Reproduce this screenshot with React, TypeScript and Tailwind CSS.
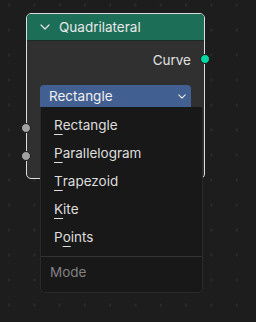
import React from 'react';

const items: { label: string; key: number }[] = [
  { label: 'Rectangle', key: 0 },
  { label: 'Parallelogram', key: 0 },
  { label: 'Trapezoid', key: 0 },
  { label: 'Kite', key: 0 },
  { label: 'Points', key: 1 },
];

function Chevron({ className }: { className?: string }) {
  return (
    <svg viewBox="0 0 10 6" className={className} fill="none" stroke="currentColor" strokeWidth="1.3" strokeLinecap="round" strokeLinejoin="round">
      <path d="M1 1l4 4 4-4" />
    </svg>
  );
}

function MenuItem({ label, keyIndex }: { label: string; keyIndex: number }) {
  const before = label.slice(0, keyIndex);
  const letter = label.charAt(keyIndex);
  const after = label.slice(keyIndex + 1);
  return (
    <div className="h-[28px] flex items-center pl-[13px] text-[13.5px] text-[#dedede]">
      {before}
      <span className="underline decoration-1 underline-offset-[4px]">{letter}</span>
      {after}
    </div>
  );
}

export default function App() {
  return (
    <div
      className="relative w-[256px] h-[322px] overflow-hidden bg-[#1d1d1d] bg-[radial-gradient(circle,#2d2d2d_1px,transparent_1.5px)] bg-[length:25.3px_25px] bg-[position:-3.6px_-7.5px]"
      style={{ fontFamily: 'Inter, "DejaVu Sans", sans-serif' }}
    >
      {/* node */}
      <div className="absolute left-[26px] top-[13px] w-[179px] h-[166px] rounded-[5px] border border-[#dcdcdc] bg-[#303030]">
        <div className="h-[27px] rounded-t-[4px] bg-[#1d6e57] border-b border-[#1a2a25] flex items-center pl-[13px] gap-[9px] text-[13.5px] text-[#e8e8e8]">
          <Chevron className="w-[10px] h-[6px] text-[#e0e0e0]" />
          <span>Quadrilateral</span>
        </div>
        <div className="flex flex-col pt-[8px]">
          <div className="h-[22px] flex items-center justify-end pr-[13px] text-[13.5px] text-[#e0e0e0]">Curve</div>
          <div className="mt-[14px] ml-[13px] mr-[13px] h-[23px] rounded-t-[4px] bg-[#425f91] flex items-center justify-between pl-[9px] pr-[5px] text-[13.5px] text-[#f0f0f0]">
            <span>Rectangle</span>
            <Chevron className="w-[8px] h-[5px] text-[#f0f0f0]" />
          </div>
        </div>
        {/* sockets */}
        <div className="absolute right-[-6px] top-[40px] w-[10px] h-[10px] rounded-full bg-[#00d6a3] border border-[#1a1a1a]" />
        <div className="absolute left-[-6px] top-[109px] w-[10px] h-[10px] rounded-full bg-[#a1a1a1] border border-[#1a1a1a]" />
        <div className="absolute left-[-6px] top-[137px] w-[10px] h-[10px] rounded-full bg-[#a1a1a1] border border-[#1a1a1a]" />
      </div>

      {/* dropdown menu */}
      <div className="absolute left-[40px] top-[107px] w-[163px] h-[186px] rounded-b-[5px] border border-t-0 border-[#2a2a2a] bg-[#181818] flex flex-col pt-[4px]">
        {items.map((it) => (
          <MenuItem key={it.label} label={it.label} keyIndex={it.key} />
        ))}
        <div className="mt-[5px] h-px bg-[#333333]" />
        <div className="h-[31px] flex items-center pl-[9px] text-[13.5px] text-[#808080]">Mode</div>
      </div>
    </div>
  );
}
